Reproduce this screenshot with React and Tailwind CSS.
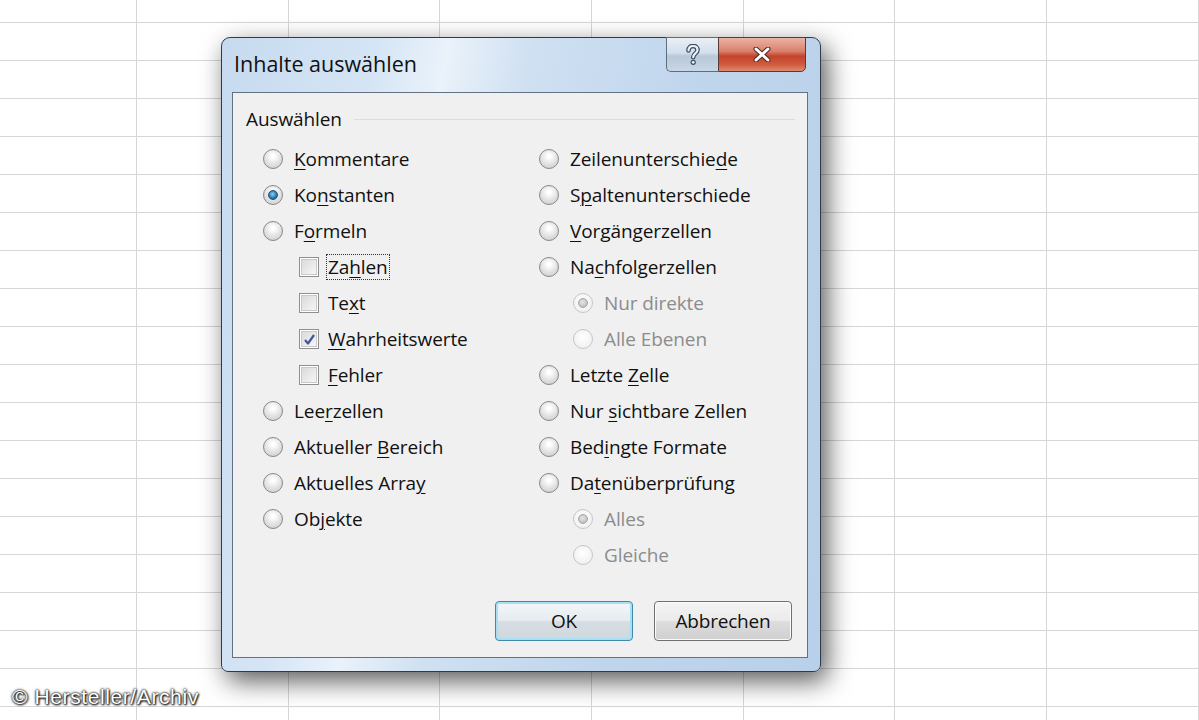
import { Fragment } from 'react';

const UI_FONT = "font-['Open_Sans','Noto_Sans',sans-serif]";

const leftItems = [
  { type: 'radio', text: 'Kommentare', at: 0 },
  { type: 'radio', text: 'Konstanten', at: 2, checked: true },
  { type: 'radio', text: 'Formeln', at: 1 },
  { type: 'check', text: 'Zahlen', at: 2, sub: true, focus: true },
  { type: 'check', text: 'Text', at: 2, sub: true },
  { type: 'check', text: 'Wahrheitswerte', at: 0, sub: true, checked: true },
  { type: 'check', text: 'Fehler', at: 0, sub: true },
  { type: 'radio', text: 'Leerzellen', at: 3 },
  { type: 'radio', text: 'Aktueller Bereich', at: 10 },
  { type: 'radio', text: 'Aktuelles Array', at: 14 },
  { type: 'radio', text: 'Objekte', at: 2 },
];

const rightItems = [
  { type: 'radio', text: 'Zeilenunterschiede', at: 16 },
  { type: 'radio', text: 'Spaltenunterschiede', at: 1 },
  { type: 'radio', text: 'Vorgängerzellen', at: 0 },
  { type: 'radio', text: 'Nachfolgerzellen', at: 2 },
  { type: 'radio', text: 'Nur direkte', sub: true, disabled: true, checked: true },
  { type: 'radio', text: 'Alle Ebenen', sub: true, disabled: true },
  { type: 'radio', text: 'Letzte Zelle', at: 7 },
  { type: 'radio', text: 'Nur sichtbare Zellen', at: 4 },
  { type: 'radio', text: 'Bedingte Formate', at: 3 },
  { type: 'radio', text: 'Datenüberprüfung', at: 2 },
  { type: 'radio', text: 'Alles', sub: true, disabled: true, checked: true },
  { type: 'radio', text: 'Gleiche', sub: true, disabled: true },
];

function Accel({ text, at }) {
  if (at === undefined) return text;
  return (
    <>
      {text.slice(0, at)}
      <span className="underline decoration-1 underline-offset-[3px]">{text[at]}</span>
      {text.slice(at + 1)}
    </>
  );
}

function Radio({ checked, disabled }) {
  return (
    <span
      className={`relative flex h-[20px] w-[20px] shrink-0 items-center justify-center rounded-full border ${
        disabled
          ? 'border-[#c6c6c6] bg-[radial-gradient(circle_at_50%_40%,#ffffff,#ececec)]'
          : 'border-[#86888a] bg-[radial-gradient(circle_at_50%_35%,#ffffff_10%,#dedede_60%,#c9c9c9)]'
      }`}
    >
      {checked && (
        <span
          className={`h-[10px] w-[10px] rounded-full ${
            disabled
              ? 'border border-[#a6a6a6] bg-[radial-gradient(circle_at_45%_40%,#e6e6e6,#b1b1b1)]'
              : 'border border-[#1b4f73] bg-[radial-gradient(circle_at_45%_40%,#8fd0f2,#2a7fb4_55%,#15496f)]'
          }`}
        />
      )}
    </span>
  );
}

function Checkbox({ checked }) {
  return (
    <span className="flex h-[20px] w-[20px] shrink-0 items-center justify-center border border-[#8f8f8f] bg-white">
      <span className="flex h-[16px] w-[16px] items-center justify-center border border-[#c9c9c9] bg-[linear-gradient(135deg,#dadada,#f6f6f6)]">
        {checked && (
          <svg width="13" height="13" viewBox="0 0 13 13">
            <path d="M2 7 L5 10.5 L11 2" fill="none" stroke="#3e5a96" strokeWidth="2.2" strokeLinejoin="round" />
          </svg>
        )}
      </span>
    </span>
  );
}

function Option({ item, subIndent }) {
  const textColor = item.disabled ? 'text-[#8c8c8c]' : 'text-[#111]';
  return (
    <div className="flex h-[36px] items-center" style={item.sub ? { paddingLeft: subIndent } : undefined}>
      {item.type === 'radio' ? (
        <Radio checked={item.checked} disabled={item.disabled} />
      ) : (
        <Checkbox checked={item.checked} />
      )}
      <span
        className={`${item.type === 'radio' ? 'ml-[11px]' : 'ml-[8px] px-[1px]'} ${textColor} ${
          item.focus ? 'outline-1 outline-dotted outline-[#333]' : ''
        } whitespace-nowrap text-[19px] leading-[24px] tracking-[-0.1px]`}
      >
        <Accel text={item.text} at={item.at} />
      </span>
    </div>
  );
}

function SheetGrid() {
  const cells = Array.from({ length: 8 * 20 });
  return (
    <div className="grid grid-cols-[137px_repeat(7,151.7px)] grid-rows-[23px_repeat(19,38px)]">
      {cells.map((_, i) => (
        <div key={i} className="border-r border-b border-[#d6d6d6]" />
      ))}
    </div>
  );
}

function TitleButtons() {
  return (
    <div className="flex h-[35px] -mt-[1px]">
      <div className="flex w-[52px] items-center justify-center rounded-bl-[5px] border border-r-0 border-[#5d6d80] bg-[linear-gradient(to_bottom,#e9eff6_0%,#d3dfeb_45%,#b7c8da_55%,#c9d7e5_100%)]">
        <svg width="16" height="22" viewBox="0 0 16 22">
          <path d="M3.5 6.5 C3.5 3.5 5.5 2 8 2 C10.8 2 12.5 3.6 12.5 6 C12.5 9.2 8.2 9.6 8.2 13.2" fill="none" stroke="#3a4c62" strokeWidth="4.6" strokeLinecap="round" />
          <circle cx="8.2" cy="18.3" r="2.6" fill="#3a4c62" />
          <path d="M3.5 6.5 C3.5 3.5 5.5 2 8 2 C10.8 2 12.5 3.6 12.5 6 C12.5 9.2 8.2 9.6 8.2 13.2" fill="none" stroke="#eef3f8" strokeWidth="2.2" strokeLinecap="round" />
          <circle cx="8.2" cy="18.3" r="1.4" fill="#eef3f8" />
        </svg>
      </div>
      <div className="flex w-[88px] items-center justify-center rounded-br-[5px] border border-[#5b3a36] bg-[linear-gradient(to_bottom,#eab3a4_0%,#d9816d_40%,#c4432d_55%,#cf5a40_80%,#e08a6e_100%)]">
        <svg width="18" height="15" viewBox="0 0 18 15">
          <path d="M3 2 L15 13 M15 2 L3 13" stroke="#4a2a26" strokeWidth="5" strokeLinecap="round" />
          <path d="M3 2 L15 13 M15 2 L3 13" stroke="#ffffff" strokeWidth="3" strokeLinecap="round" />
        </svg>
      </div>
    </div>
  );
}

function PushButton({ children, isDefault }) {
  return (
    <button
      className={`flex h-[40px] w-[138px] items-center justify-center rounded-[4px] border text-[19px] tracking-[-0.2px] text-[#111] ${
        isDefault
          ? 'border-[#3d8ba9] bg-[linear-gradient(to_bottom,#f2f6f8_0%,#e6ecef_48%,#d7dee3_52%,#cfd8dd_100%)] shadow-[inset_0_0_0_2px_#a9dff2]'
          : 'border-[#707070] bg-[linear-gradient(to_bottom,#f4f4f4_0%,#ebebeb_48%,#dddddd_52%,#cfcfcf_100%)] shadow-[inset_0_0_0_1px_#fbfbfb]'
      }`}
    >
      {children}
    </button>
  );
}

export default function App() {
  return (
    <div className="relative h-[720px] w-[1199px] overflow-hidden bg-white">
      <SheetGrid />

      {/* Dialog */}
      <div className="absolute left-[221px] top-[37px] flex h-[635px] w-[600px] flex-col rounded-t-[9px] rounded-b-[7px] border border-[#2f3b48] bg-[linear-gradient(100deg,#c6daef_0%,#d5e5f5_22%,#eaf2fa_32%,#cfe0f2_44%,#bfd5ec_70%,#b8d0e9_100%)] shadow-[6px_9px_26px_rgba(0,0,0,0.65)]">
        <div className="flex h-[54px] items-start justify-between pl-[12px] pr-[14px]">
          <span className={`${UI_FONT} mt-[12px] text-[21.5px] leading-[28px] text-[#111]`}>Inhalte auswählen</span>
          <TitleButtons />
        </div>

        <div className={`${UI_FONT} ml-[10px] mr-[12px] mb-[13px] flex flex-1 flex-col border border-[#627283] bg-[#f0f0f0]`}>
          {/* Group header */}
          <div className="mt-[14px] flex items-center pl-[13px] pr-[12px]">
            <span className="text-[19px] leading-[24px] tracking-[-0.1px] text-[#111]">Auswählen</span>
            <div className="ml-[12px] h-[1px] flex-1 bg-[#d8dde2]" />
          </div>

          <div className="mt-[10px] grid grid-cols-[276px_1fr] pl-[30px]">
            <div className="flex flex-col">
              {leftItems.map((item) => (
                <Option key={item.text} item={item} subIndent={36} />
              ))}
            </div>
            <div className="flex flex-col">
              {rightItems.map((item) => (
                <Option key={item.text} item={item} subIndent={34} />
              ))}
            </div>
          </div>

          <div className="flex-1" />

          <div className="flex justify-end gap-[21px] pb-[16px] pr-[15px]">
            <PushButton isDefault>OK</PushButton>
            <PushButton>Abbrechen</PushButton>
          </div>
        </div>
      </div>

      {/* Watermark */}
      <span className="absolute left-[12px] top-[684px] font-['Liberation_Sans',Arial,sans-serif] text-[21px] leading-[26px] tracking-[0.6px] text-white [text-shadow:0_0_2px_#000,0_0_3px_#333,1px_1px_2px_#000]">
        © Hersteller/Archiv
      </span>
    </div>
  );
}
